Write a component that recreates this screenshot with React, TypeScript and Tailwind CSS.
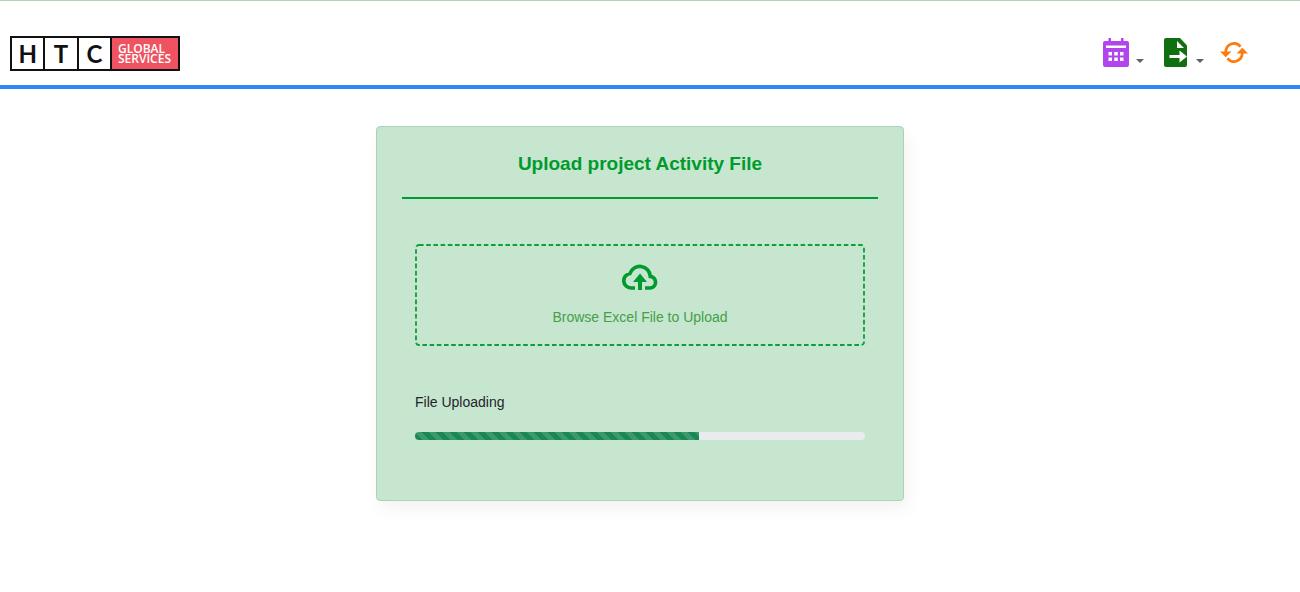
import React from "react";

const progress = 63;

function Logo() {
  return (
    <a href="#" aria-label="HTC Global Services" className="flex h-[35px] w-[170px] border-2 border-[#111111] font-['Lato',sans-serif] text-[#111111]">
      {["H", "T", "C"].map((letter) => (
        <span key={letter} className="flex flex-1 items-center justify-center border-r-2 border-[#111111] pt-0.5 text-2xl font-bold">
          {letter}
        </span>
      ))}
      <span className="flex w-[66px] items-center bg-[#ef5260] pt-0.5 pl-1.5 font-['Open_Sans',sans-serif] text-xs leading-[10px] font-semibold text-white">
        <span>
          GLOBAL
          <br />
          SERVICES
        </span>
      </span>
    </a>
  );
}

function Caret() {
  return (
    <svg width="8" height="4" viewBox="0 0 8 4" className="mb-1" aria-hidden="true">
      <path d="M0 0h8L4 4z" fill="#5c636a" />
    </svg>
  );
}

function CalendarIcon() {
  return (
    <svg width="26" height="29" viewBox="0 0 26 29" aria-hidden="true">
      <path
        fill="#b144ec"
        fillRule="evenodd"
        d="M5.500 0h2.500v3h10V0h2.500v3H24q2 0 2 2v22q0 2-2 2H2q-2 0-2-2V5q0-2 2-2h3.500zM3 7.500v2.500h20V7.500zM5.500 14v3.500h3.500v-3.500zM11.250 14v3.500h3.500v-3.500zM17 14v3.500h3.500v-3.500zM5.500 19.500v3.500h3.500v-3.500zM11.250 19.500v3.500h3.500v-3.500zM17 19.500v3.500h3.500v-3.500z"
      />
    </svg>
  );
}

function FileExportIcon() {
  return (
    <svg width="24" height="29" viewBox="0 0 24 29" aria-hidden="true">
      <path fill="#107010" d="M2 0h14l7 7.500V27q0 2-2 2H2q-2 0-2-2V2q0-2 2-2z" />
      <path fill="#fff" d="M13 3v7h7zM5.500 17h10v-4.500l7.500 6-7.500 6V20h-10z" />
    </svg>
  );
}

function RefreshIcon() {
  return (
    <svg width="28" height="21" viewBox="0 0 28 21" aria-hidden="true">
      <g fill="none" stroke="#ff7a0c" strokeWidth="2.700">
        <path d="M5.700 10.500A8.400 8.800 0 0 1 20.500 4.600" />
        <path d="M22.300 10.500A8.400 8.800 0 0 1 7.500 16.400" />
      </g>
      <path fill="#ff7a0c" d="M0 9.500h11.500L5.700 15.200zM16.500 11.500H28L22.300 5.800z" />
    </svg>
  );
}

function CloudUploadIcon() {
  return (
    <svg width="36" height="26" viewBox="0 0 36 26" aria-hidden="true">
      <path d="M13 24H9A7.300 7.300 0 0 1 7.900 9.500A10.500 10.500 0 0 1 28.300 12.300A5.900 5.900 0 0 1 28.500 24H23" fill="none" stroke="#009a2e" strokeWidth="3.700" />
      <path fill="#009a2e" d="M18 9.500l7 8.500h-5v8h-4v-8h-5z" />
    </svg>
  );
}

function DashedOutline() {
  return (
    <svg className="absolute inset-0 size-full overflow-visible p-px" aria-hidden="true">
      <rect width="100%" height="100%" rx="3" fill="none" stroke="#0c9f3a" strokeWidth="1.800" strokeDasharray="4.600 2.600" />
    </svg>
  );
}

export default function App() {
  return (
    <div className="min-h-screen border-t border-[#b3d1b5] bg-white font-['Liberation_Sans',Arial,sans-serif] text-[#212529]">
      <header className="flex h-[88px] items-center justify-between border-b-4 border-[#2d87fb] pt-5 pr-[52px] pl-2.5">
        <Logo />
        <nav aria-label="Project tools" className="flex items-center pb-0.5">
          <button type="button" aria-label="Calendar" className="mr-5 flex items-end gap-[7px]">
            <CalendarIcon />
            <Caret />
          </button>
          <button type="button" aria-label="Export file" className="mr-4 flex items-end gap-2">
            <FileExportIcon />
            <Caret />
          </button>
          <button type="button" aria-label="Refresh">
            <RefreshIcon />
          </button>
        </nav>
      </header>

      <main className="pt-[37px] pr-5">
        <section className="mx-auto max-w-[528px] rounded border border-[#add2b7] bg-[#c7e6cf] px-[25px] pt-[25px] pb-[60px] shadow-[4px_8px_16px_rgba(0,0,0,0.05)]">
          <h1 className="border-b-2 border-[#009a2e] pb-[21px] text-center text-[19px] leading-6 font-bold text-[#009a2e]">
            Upload project Activity File
          </h1>
          <div className="px-[13px] pt-[45px]">
            <button type="button" className="relative flex h-[102px] w-full flex-col items-center pt-5 text-sm text-[#43a047]">
              <DashedOutline />
              <CloudUploadIcon />
              <span className="mt-[17px]">Browse Excel File to Upload</span>
            </button>
            <p id="upload-status" className="mt-[46px] text-sm">File Uploading</p>
            <div
              role="progressbar"
              aria-labelledby="upload-status"
              aria-valuenow={progress}
              aria-valuemin={0}
              aria-valuemax={100}
              className="mt-5 h-2 overflow-hidden rounded bg-[#e9ecef]"
            >
              <div
                className="h-full bg-[#198754] bg-[linear-gradient(45deg,rgba(255,255,255,0.15)_25%,transparent_25%,transparent_50%,rgba(255,255,255,0.15)_50%,rgba(255,255,255,0.15)_75%,transparent_75%,transparent)] bg-size-[14px_14px]"
                style={{ width: `${progress}%` }}
              />
            </div>
          </div>
        </section>
      </main>
    </div>
  );
}
